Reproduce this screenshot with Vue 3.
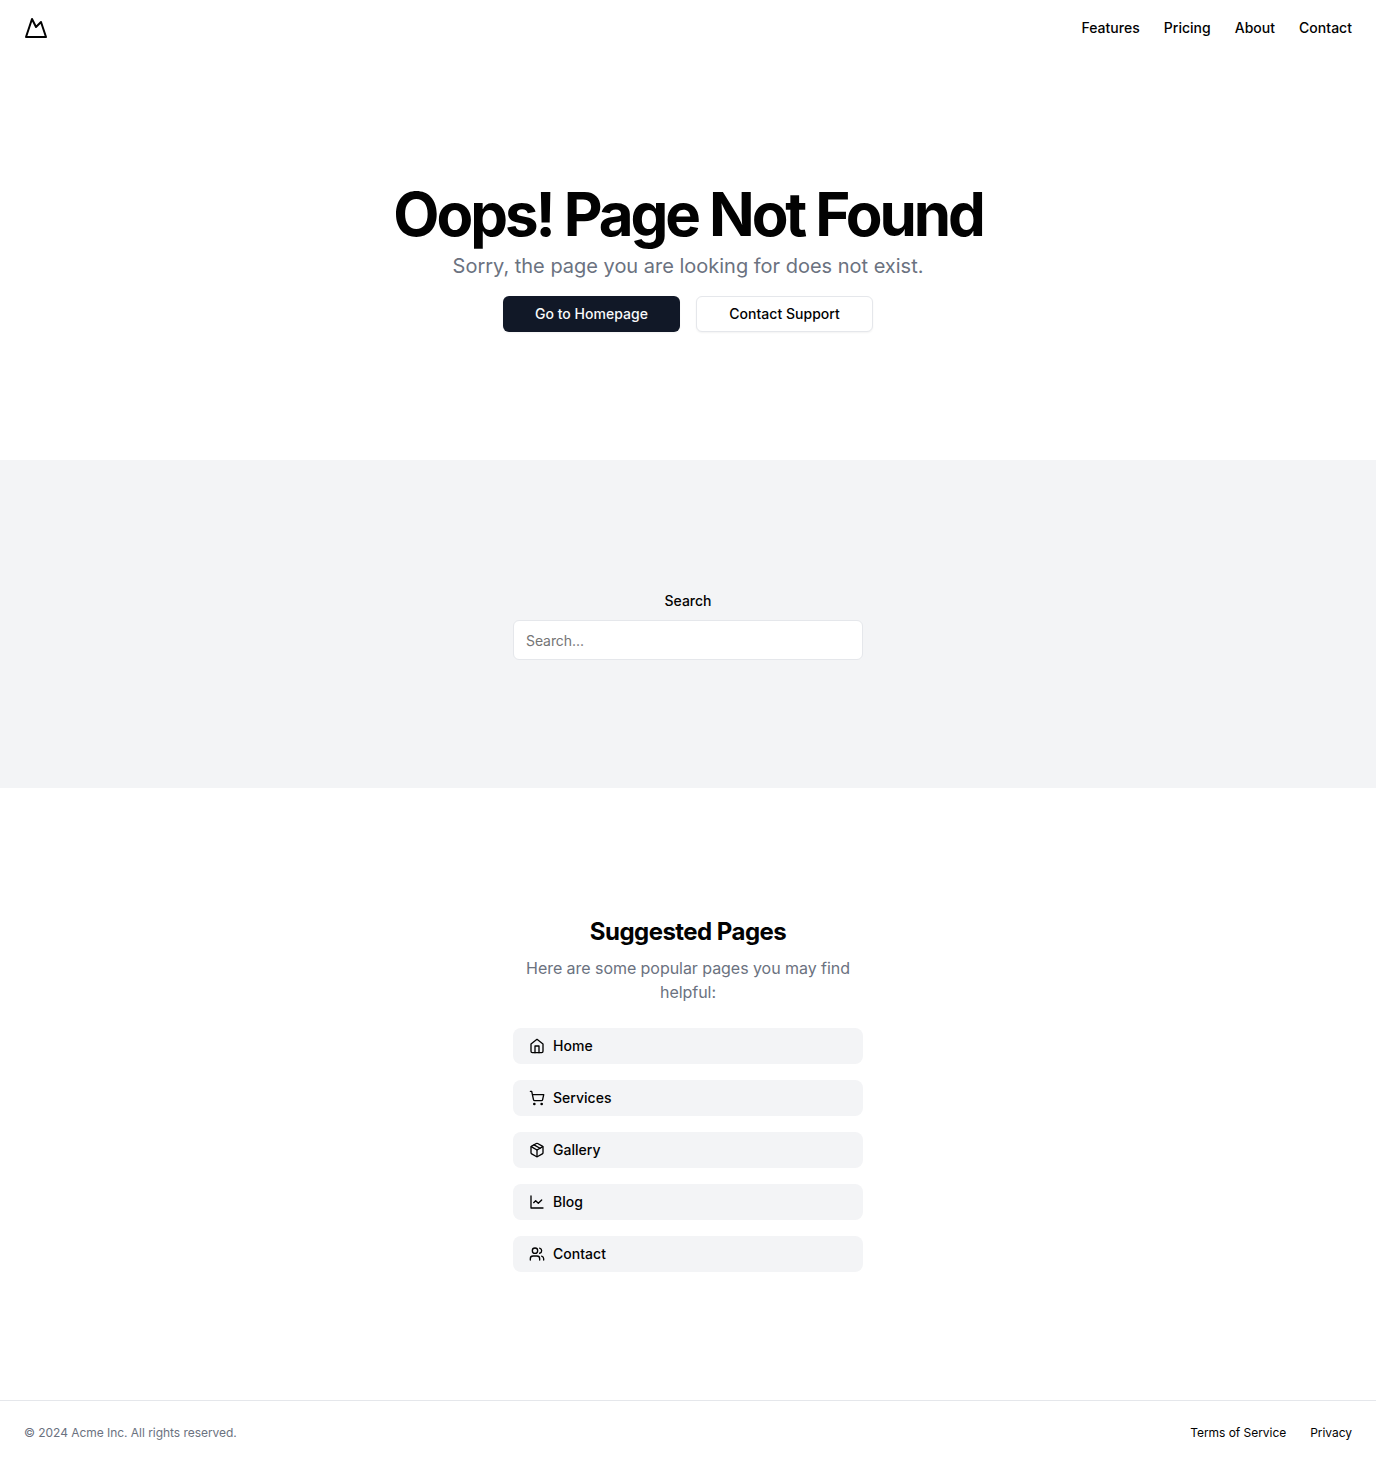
<script setup>
const nav = ['Features', 'Pricing', 'About', 'Contact']
const pages = [
  { label: 'Home', paths: ['m3 9 9-7 9 7v11a2 2 0 0 1-2 2H5a2 2 0 0 1-2-2z', 'M9 22V12h6v10'] },
  {
    label: 'Services',
    paths: ['M2.05 2.05h2l2.66 12.42a2 2 0 0 0 2 1.58h9.78a2 2 0 0 0 1.95-1.57l1.65-7.43H5.12'],
    circles: [[8, 21, 1], [19, 21, 1]],
  },
  {
    label: 'Gallery',
    paths: [
      'm7.5 4.27 9 5.15',
      'M21 8a2 2 0 0 0-1-1.73l-7-4a2 2 0 0 0-2 0l-7 4A2 2 0 0 0 3 8v8a2 2 0 0 0 1 1.73l7 4a2 2 0 0 0 2 0l7-4A2 2 0 0 0 21 16Z',
      'm3.3 7 8.7 5 8.7-5',
      'M12 22V12',
    ],
  },
  { label: 'Blog', paths: ['M3 3v18h18', 'm19 9-5 5-4-4-3 3'] },
  {
    label: 'Contact',
    paths: ['M16 21v-2a4 4 0 0 0-4-4H6a4 4 0 0 0-4 4v2', 'M22 21v-2a4 4 0 0 0-3-3.87', 'M16 3.13a4 4 0 0 1 0 7.75'],
    circles: [[9, 7, 4]],
  },
]
</script>

<template>
  <div class="page">
    <header class="header">
      <a class="logo">
        <svg class="icon" width="24" height="24" viewBox="0 0 24 24"><path d="m8 3 4 8 5-5 5 15H2L8 3z" /></svg>
      </a>
      <nav class="nav"><a v-for="item in nav" :key="item">{{ item }}</a></nav>
    </header>
    <main>
      <section class="hero">
        <h1>Oops! Page Not Found</h1>
        <p class="lead">Sorry, the page you are looking for does not exist.</p>
        <div class="actions">
          <a class="button primary">Go to Homepage</a>
          <a class="button outline">Contact Support</a>
        </div>
      </section>
      <section class="search">
        <div class="column">
          <label for="search">Search</label>
          <input id="search" type="text" placeholder="Search..." />
        </div>
      </section>
      <section class="suggested">
        <div class="column">
          <h2>Suggested Pages</h2>
          <p class="intro">Here are some popular pages you may find helpful:</p>
          <div class="links">
            <a v-for="page in pages" :key="page.label" class="link">
              <svg class="icon" width="16" height="16" viewBox="0 0 24 24">
                <circle v-for="c in page.circles" :key="c[0]" :cx="c[0]" :cy="c[1]" :r="c[2]" />
                <path v-for="d in page.paths" :key="d" :d="d" />
              </svg>
              <span>{{ page.label }}</span>
            </a>
          </div>
        </div>
      </section>
    </main>
    <footer class="footer">
      <p>© 2024 Acme Inc. All rights reserved.</p>
      <nav class="legal"><a>Terms of Service</a><a>Privacy</a></nav>
    </footer>
  </div>
</template>

<style>
body {
  margin: 0;
  background: #fff;
}
</style>

<style scoped>
.page,
.page * {
  box-sizing: border-box;
}
.page {
  min-height: 1465px;
  display: flex;
  flex-direction: column;
  font-family: Inter, sans-serif;
  font-size: 16px;
  line-height: 24px;
  color: #020202;
}
h1,
h2,
p {
  margin: 0;
}
.icon {
  display: block;
  flex: none;
  fill: none;
  stroke: currentColor;
  stroke-width: 2;
  stroke-linecap: round;
  stroke-linejoin: round;
}
.header {
  height: 56px;
  padding: 0 24px;
  display: flex;
  align-items: center;
  justify-content: space-between;
}
.nav {
  display: flex;
  gap: 24px;
  font-size: 14px;
  font-weight: 500;
  line-height: 20px;
  letter-spacing: 0.02px;
}
.hero {
  height: 404px;
  padding: 128px 24px;
  display: flex;
  flex-direction: column;
  align-items: center;
  text-align: center;
}
h1 {
  font-size: 60px;
  line-height: 60px;
  font-weight: 700;
  letter-spacing: -3.1px;
}
.lead {
  margin-top: 8px;
  font-size: 20px;
  line-height: 28px;
  letter-spacing: -0.01px;
  color: #6b7280;
}
.actions {
  margin-top: 16px;
  display: flex;
  gap: 16px;
}
.button {
  width: 177px;
  height: 36px;
  display: flex;
  align-items: center;
  justify-content: center;
  border-radius: 6px;
  font-size: 14px;
  font-weight: 500;
  letter-spacing: 0.03px;
  box-shadow: 0 1px 2px rgb(0 0 0 / 5%);
}
.primary {
  background: #111827;
  color: #f9fafb;
}
.outline {
  border: 1px solid #e5e7eb;
  background: #fff;
}
.search {
  height: 328px;
  padding: 128px 24px;
  background: #f3f4f6;
}
.column {
  width: 350px;
  margin: 0 auto;
  text-align: center;
}
label {
  display: block;
  padding-top: 1px;
  font-size: 14px;
  line-height: 24px;
  font-weight: 500;
}
input {
  display: block;
  width: 100%;
  height: 40px;
  margin-top: 7px;
  padding: 8px 12px;
  border: 1px solid #e5e7eb;
  border-radius: 6px;
  background: #fff;
  font: 14px/20px Inter, sans-serif;
  letter-spacing: -0.08px;
}
input::placeholder {
  color: #757575;
  opacity: 1;
}
.suggested {
  padding: 128px 24px;
}
h2 {
  font-size: 24px;
  line-height: 32px;
  font-weight: 700;
  letter-spacing: -0.54px;
}
.intro {
  margin-top: 8px;
  letter-spacing: -0.05px;
  color: #6b7280;
}
.links {
  margin-top: 24px;
  display: flex;
  flex-direction: column;
  gap: 16px;
}
.link {
  height: 36px;
  padding: 0 16px;
  display: flex;
  align-items: center;
  gap: 8px;
  border-radius: 8px;
  background: #f3f4f6;
  font-size: 14px;
  line-height: 20px;
  font-weight: 500;
  letter-spacing: 0.02px;
}
.footer {
  height: 65px;
  padding: 0 24px;
  border-top: 1px solid #e5e7eb;
  display: flex;
  align-items: center;
  justify-content: space-between;
  font-size: 12px;
  line-height: 16px;
  letter-spacing: -0.04px;
}
.footer p {
  color: #6b7280;
}
.legal {
  display: flex;
  gap: 24px;
}
</style>
